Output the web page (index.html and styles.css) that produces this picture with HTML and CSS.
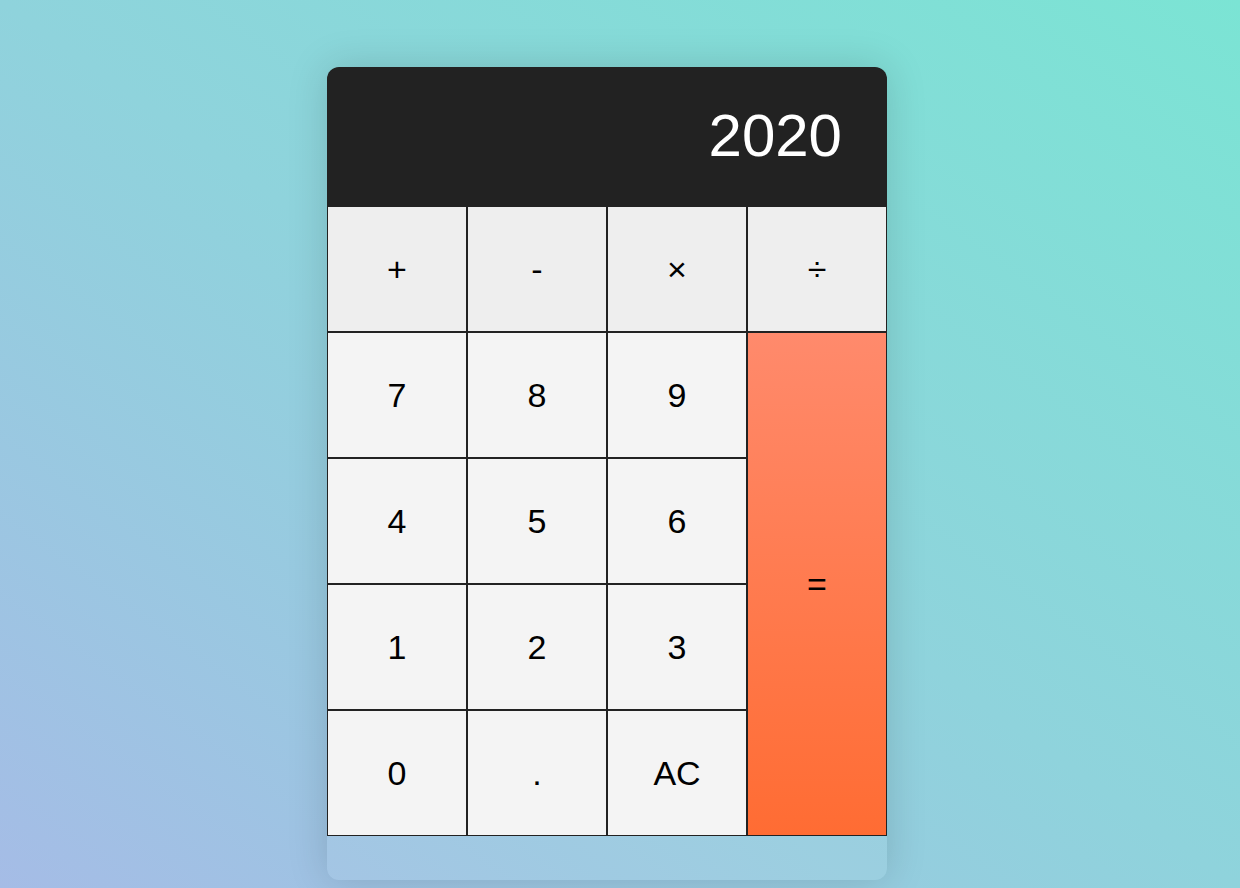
FILE: index.html
```html
<!DOCTYPE html>
<html lang="en">
<head>
<meta charset="utf-8">
<title>Calculator</title>
<link rel="stylesheet" href="styles.css">
</head>
<body>
<div class="page">
  <div class="calculator">
    <div class="screen">2020</div>
    <div class="keys">
      <button class="key op">+</button>
      <button class="key op">-</button>
      <button class="key op">&times;</button>
      <button class="key op">&divide;</button>
      <button class="key">7</button>
      <button class="key">8</button>
      <button class="key">9</button>
      <button class="key equal">=</button>
      <button class="key">4</button>
      <button class="key">5</button>
      <button class="key">6</button>
      <button class="key">1</button>
      <button class="key">2</button>
      <button class="key">3</button>
      <button class="key zero">0</button>
      <button class="key">.</button>
      <button class="key">AC</button>
    </div>
  </div>
</div>
</body>
</html>
```
FILE: styles.css
```css
* { box-sizing: border-box; }
html, body { margin: 0; height: 100%; }
body {
  font-family: "Liberation Sans", Arial, sans-serif;
  background: linear-gradient(to top right, #a5bce6 0%, #8fd3dc 50%, #7be4d4 100%);
  overflow: hidden;
}
.page {
  display: flex;
  justify-content: center;
  padding-top: 67px;
  padding-right: 26px;
}
.calculator {
  width: 560px;
  height: 813px;
  border-radius: 12px;
  background: rgba(255, 255, 255, 0.06);
  box-shadow: 0 0 40px rgba(0, 0, 0, 0.15);
}
.screen {
  height: 139px;
  background: #222222;
  color: #ffffff;
  border-radius: 12px 12px 0 0;
  font-size: 60px;
  text-align: right;
  padding: 36px 45px 0 0;
  line-height: 1.1;
}
.keys {
  display: grid;
  grid-template-columns: repeat(4, 140px);
  grid-auto-rows: 126px;
}
.key {
  font-family: "Liberation Sans", Arial, sans-serif;
  font-size: 34px;
  color: #000;
  background: #f4f4f4;
  border: 1px solid #222222;
  margin: 0;
  padding: 0;
}
.key.op { background: #eeeeee; }
.key.equal {
  grid-column: 4;
  grid-row: 2 / span 4;
  background: linear-gradient(to bottom, #ff8a6c, #ff6c33);
}
```
